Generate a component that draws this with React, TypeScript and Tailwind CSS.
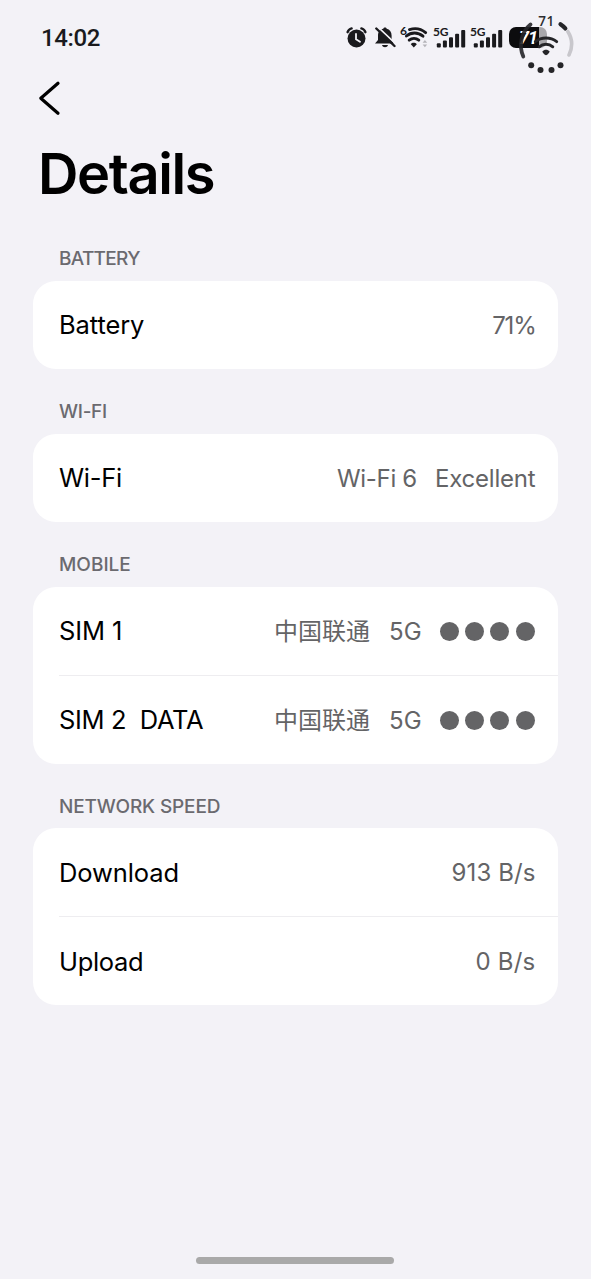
import type { ReactNode } from "react"

const AlarmIcon = () => (
  <svg className="absolute left-[346px] top-[27px]" width="21" height="21" viewBox="0 0 21 21" fill="none">
    <circle cx="10.5" cy="11.5" r="9" fill="#1a1a1d" />
    <path d="M1.6 5.2C2.2 3.3 3.7 1.9 5.6 1.4M19.4 5.2C18.8 3.3 17.3 1.9 15.4 1.4" stroke="#1a1a1d" strokeWidth="2.4" strokeLinecap="round" />
    <path d="M10 7v5.2l4 2.6" stroke="#f3f2f7" strokeWidth="1.8" strokeLinecap="round" />
  </svg>
)

const BellOffIcon = () => (
  <svg className="absolute left-[374px] top-[26px]" width="22" height="22" viewBox="0 0 22 22" fill="none">
    <path d="M1 17.5L4 14V9.5C4 5.5 6.5 3.3 9.3 2.8C9.6 1.2 12.4 1.2 12.7 2.8C15.6 3.4 17.6 5.8 17.6 9.5V14L20 17.5Z" fill="#1a1a1d" />
    <path d="M8 19h6c-.4 1.6-1.6 2.2-3 2.2S8.4 20.6 8 19Z" fill="#1a1a1d" />
    <path d="M3.8 .8L22.6 18.6" stroke="#f3f2f7" strokeWidth="1.6" />
    <path d="M2.3 2.5L20.5 20" stroke="#1a1a1d" strokeWidth="2.4" strokeLinecap="round" />
  </svg>
)

const WifiIcon = () => (
  <div className="absolute left-[400px] top-[26px] h-[22px] w-7">
    <span className="absolute left-0 top-0 font-['Lato'] text-[12px] leading-[10px] font-bold">6</span>
    <svg width="28" height="22" viewBox="0 0 28 22" fill="none">
      <g stroke="#1a1a1d" strokeWidth="2.9" strokeLinecap="round">
        <path d="M9.5 3.6C14.5 1.9 20.8 2.6 25.6 6.6" />
        <path d="M6.4 10C11 6 18 5.8 23 10.2" />
        <path d="M9.2 14.2C12 11.9 16 11.9 18.8 14.2" />
      </g>
      <path d="M10.8 18.2C12.2 16.4 15.2 16.4 16.8 18.2L13.8 21.4Z" fill="#1a1a1d" />
      <path d="M22.6 16.8L24.9 14l2.3 2.8ZM22.6 18.4L24.9 21.2l2.3-2.8Z" fill="#b5b4b9" />
    </svg>
  </div>
)

const SignalIcon = () => (
  <div className="relative h-[21px] w-8">
    <span className="absolute -left-px top-0 font-['Lato'] text-[12px] leading-[10px] font-bold tracking-[-0.2px]">5G</span>
    <svg width="32" height="21" viewBox="0 0 32 21" fill="#1a1a1d">
      <rect x="2.8" y="16.3" width="4" height="4.2" rx="1" />
      <rect x="8.9" y="13.5" width="4" height="7" rx="1" />
      <rect x="15" y="10.3" width="4" height="10.2" rx="1" />
      <rect x="21.1" y="6.8" width="4" height="13.7" rx="1" />
      <rect x="27.2" y="3" width="4" height="17.5" rx="1" />
    </svg>
  </div>
)

const BatteryIcon = () => (
  <div className="absolute left-[509px] top-[27px] flex h-[21px] w-[38px] items-center overflow-hidden rounded-[7px] bg-[linear-gradient(90deg,#0c0c0e_30px,#a8a7ab_30px)]">
    <span className="ml-[10px] font-['Roboto'] text-[18px] leading-none font-bold tracking-[-1px] text-white italic">71</span>
  </div>
)

// floating gauge that sits on top of the system battery
const Gauge = () => (
  <div className="absolute left-[516px] top-[13px] h-[62px] w-[60px]">
    <span className="absolute left-[1px] top-[2px] w-[59px] text-center font-['Open_Sans'] text-[13.5px] leading-[13px] font-semibold tracking-[0.5px] text-[#2d2d30]">71</span>
    <svg width="60" height="62" viewBox="0 0 60 62" fill="none" strokeLinecap="round">
      <path d="M14.5 11.4C5.5 18.5 2.3 32 7.3 43.5" stroke="#252528" strokeOpacity=".9" strokeWidth="3.8" />
      <path d="M44.5 11.2C46.2 12.3 47.9 13.8 49.3 15.4" stroke="#252528" strokeWidth="4.2" />
      <path d="M51.8 18.5C56.3 25.5 56.8 34 53 42" stroke="#c8c7cc" strokeWidth="3.6" />
      <g fill="#252528">
        <circle cx="15.2" cy="52.3" r="3" />
        <circle cx="24.5" cy="57" r="3" />
        <circle cx="35.5" cy="57" r="3" />
        <circle cx="44.5" cy="52.3" r="3" />
        <path d="M26.5 38.3C28 36.2 32 36.2 33.5 38.3C34 39.3 31.2 42.2 30 42.2S26 39.3 26.5 38.3Z" />
      </g>
      <g stroke="#252528" strokeWidth="2.9">
        <path d="M19.3 28.6C25.5 23.8 34.5 23.8 40.7 28.600" />
        <path d="M23.2 33.800C27 30.400 33 30.400 36.800 33.800" />
      </g>
    </svg>
  </div>
)

const StatusBar = () => (
  <div className="relative h-[76px] text-[#1a1a1d]">
    <span className="absolute left-[41px] top-[26px] font-['Roboto'] text-[24px] leading-6 font-medium tracking-[-0.4px]">14:02</span>
    <AlarmIcon />
    <BellOffIcon />
    <WifiIcon />
    <div className="absolute left-[434px] top-[27px] flex gap-[5px]">
      <SignalIcon />
      <SignalIcon />
    </div>
    <BatteryIcon />
    <Gauge />
  </div>
)

const Section = ({ title, children }: { title: ReactNode; children: ReactNode }) => (
  <section className="pb-[1px] last:-mt-[0.6px]">
    <h2 className="flex h-[64px] items-center pt-[21px] pl-[26px] text-[19px] font-medium text-[#6b6a6f]">{title}</h2>
    <div className="overflow-hidden rounded-[23px] bg-white">{children}</div>
  </section>
)

const Row = ({ label, children }: { label: ReactNode; children: ReactNode }) => (
  <div className="flex h-[88px] items-center justify-between pr-[22.5px] pl-[26px]">
    <span className="whitespace-pre pt-px text-[25.5px] text-black">{label}</span>
    <div className="flex items-center whitespace-pre pt-px text-[24px] text-[#646466]">{children}</div>
  </div>
)

const Divider = () => <div className="ml-[26px] h-px bg-[#eeedf0]" />

const Sim = () => (
  <>
    <span className="relative -top-[2px] mr-[19px] font-['Noto_Sans_CJK_SC',sans-serif] leading-8">中国联通</span>
    <span className="mr-[18px]">5G</span>
    <div className="-mt-px flex gap-[6.3px] pr-px">
      {[1, 2, 3, 4].map((n) => (
        <i key={n} className="size-[19px] rounded-full bg-[#646466]" />
      ))}
    </div>
  </>
)

export default function App() {
  return (
    <div className="relative h-[1279px] w-[591px] overflow-hidden bg-[#f3f2f7] font-['Inter',sans-serif]">
      <StatusBar />
      <div className="h-[44px] pl-[38px]">
        <svg width="24" height="44" viewBox="0 0 24 44" fill="none">
          <path d="M20 7.3L2.8 22.3L20 37.2" stroke="#000" strokeWidth="3.2" strokeLinecap="round" strokeLinejoin="round" />
        </svg>
      </div>
      <h1 className="h-[97px] pt-[24px] pl-[38px] text-[56px] leading-[60px] font-semibold tracking-[-1.4px] text-black">Details</h1>
      <main className="mx-[33px]">
        <Section title={<span className="tracking-[-0.7px]">BATTERY</span>}>
          <Row label={<span className="tracking-[-0.1px]">Battery</span>}>
            <span className="tracking-[-1.2px]">71%</span>
          </Row>
        </Section>
        <Section title={<span className="tracking-[-0.3px]">WI-FI</span>}>
          <Row label={<span className="tracking-[-0.3px]">Wi-Fi</span>}>
            <span className="mr-[18px] tracking-[-0.3px]">Wi-Fi 6</span>
            <span className="tracking-[-0.2px]">Excellent</span>
          </Row>
        </Section>
        <Section title={<span>MOBILE</span>}>
          <Row label={<span className="tracking-[-0.1px]">SIM 1</span>}><Sim /></Row>
          <Divider />
          <Row label={<span className="tracking-[-0.35px]">SIM 2  DATA</span>}><Sim /></Row>
        </Section>
        <Section title={<span className="tracking-[-0.15px]">NETWORK SPEED</span>}>
          <Row label={<span className="tracking-[-0.1px]">Download</span>}>
            <span className="tracking-[0.1px]">913 B/s</span>
          </Row>
          <Divider />
          <Row label={<span className="tracking-[-0.3px]">Upload</span>}>
            <span className="tracking-[0.2px]">0 B/s</span>
          </Row>
        </Section>
      </main>
      <div className="absolute bottom-[15px] left-[196px] h-[7px] w-[198px] rounded-full bg-[#a9a9a9]" />
    </div>
  )
}
